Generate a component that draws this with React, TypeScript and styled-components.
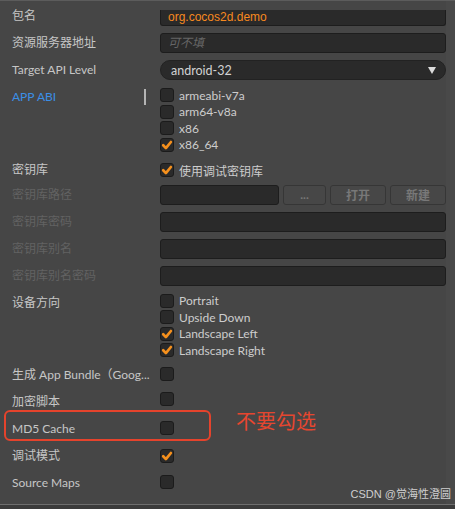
import React from "react";
import styled, { createGlobalStyle } from "styled-components";

const GlobalStyle = createGlobalStyle`
  html, body { margin: 0; padding: 0; background: #464646; }
  body { font-family: Lato, "Noto Sans CJK SC", sans-serif; font-size: 12px; color: #c8c8c8; }
  * { box-sizing: border-box; }
`;

const Frame = styled.div`
  position: relative;
  width: 455px;
  height: 509px;
  display: flex;
  flex-direction: column;
  overflow: hidden;
  background: #464646;
`;

const TopLine = styled.div`
  height: 1px;
  background: #5c5c5c;
`;

const Body = styled.div`
  flex: 1;
  display: flex;
  min-height: 0;
`;

const Viewport = styled.div`
  flex: 1;
  padding: 5px 0 0 12px;
  display: flex;
  flex-direction: column;
`;

const Gutter = styled.div`
  width: 9px;
  background: #494949;
`;

const BottomLine = styled.div`
  height: 1px;
  background: #6e6e6e;
`;

const BottomBar = styled.div`
  height: 4px;
  background: #3b3b3b;
`;

const Row = styled.div<{ $after?: number }>`
  display: grid;
  grid-template-columns: 148px 1fr;
  align-items: start;
  margin-bottom: ${(p) => (p.$after ?? 7)}px;
`;

const LabelCell = styled.div`
  display: flex;
  align-items: flex-start;
  height: 20px;
`;

const Label = styled.div<{ $tone?: "normal" | "dim" | "accent" }>`
  height: 20px;
  line-height: 20px;
  font-size: 12px;
  white-space: nowrap;
  color: ${(p) => (p.$tone === "dim" ? "#626262" : p.$tone === "accent" ? "#3b8fe6" : "#c6c6c6")};
`;

const Splitter = styled.div`
  width: 2px;
  height: 16px;
  margin: 2px 14px 0 auto;
  background: #b4b4b4;
`;

const Field = styled.div<{ $italic?: boolean; $color?: string; $cut?: boolean }>`
  height: ${(p) => (p.$cut ? 16 : 20)}px;
  margin-top: ${(p) => (p.$cut ? 4 : 0)}px;
  flex: 1;
  background: #2a2a2a;
  border: 1px solid #1d1d1d;
  ${(p) => (p.$cut ? "border-top: none;" : "")}
  border-radius: ${(p) => (p.$cut ? "0 0 3px 3px" : "3px")};
  padding: 0 7px;
  line-height: ${(p) => (p.$cut ? 14 : 18)}px;
  font-family: ${(p) => (p.$italic ? 'Lato, "Noto Sans CJK SC", sans-serif' : '"Liberation Sans", Arial, sans-serif')};
  font-style: ${(p) => (p.$italic ? "italic" : "normal")};
  font-size: 12px;
  color: ${(p) => p.$color ?? "#cfcfcf"};
  white-space: nowrap;
  overflow: hidden;
`;

const Select = styled.div`
  height: 20px;
  background: #2a2a2a;
  border: 1px solid #222;
  border-radius: 10px;
  padding: 0 9px 0 10px;
  display: flex;
  align-items: center;
  justify-content: space-between;
  color: #d2d2d2;
  font-size: 12.5px;
  font-family: Lato, "Noto Sans CJK SC", sans-serif;
`;

const Arrow = styled.span`
  width: 0;
  height: 0;
  border-left: 4.5px solid transparent;
  border-right: 4.5px solid transparent;
  border-top: 7px solid #dcdcdc;
  margin-top: 1px;
`;

const Inline = styled.div`
  display: flex;
  gap: 4px;
`;

const Button = styled.div<{ $w: number }>`
  width: ${(p) => p.$w}px;
  height: 20px;
  border: 1px solid #363636;
  background: #474747;
  border-radius: 3px;
  display: flex;
  align-items: center;
  justify-content: center;
  color: #787878;
  font-weight: 700;
  font-size: 12px;
`;

const CheckList = styled.div`
  display: flex;
  flex-direction: column;
  gap: 2.5px;
  padding: 1px 0 0.5px;
`;

const CheckItem = styled.div<{ $offset?: number }>`
  display: flex;
  align-items: center;
  gap: 5px;
  height: 14px;
  margin-top: ${(p) => p.$offset ?? 0}px;
  color: #cdcdcd;
  font-size: 12px;
  white-space: nowrap;
`;

const Box = styled.span`
  width: 14px;
  height: 14px;
  flex: none;
  background: #2a2a2a;
  border: 1px solid #1b1b1b;
  border-radius: 3px;
  display: flex;
  align-items: center;
  justify-content: center;
`;

const Highlight = styled.div`
  position: absolute;
  left: 4px;
  top: 410px;
  width: 207px;
  height: 31px;
  border: 2px solid #e5432c;
  border-radius: 6px;
`;

const Note = styled.div`
  position: absolute;
  left: 236px;
  top: 407px;
  font-family: "Noto Sans CJK SC", sans-serif;
  font-size: 20px;
  line-height: 28px;
  color: #e6462f;
`;

const Watermark = styled.div`
  position: absolute;
  right: 4px;
  top: 488px;
  font-family: "Liberation Sans", "Noto Sans CJK SC", sans-serif;
  font-size: 11px;
  line-height: 13px;
  color: #cfcfcf;
`;

const Check = ({ on }: { on?: boolean }) => (
  <Box>
    {on && (
      <svg width="12" height="12" viewBox="0 0 12 12">
        <path d="M2.2 6.3 L4.9 9.1 L9.9 3" fill="none" stroke="#f5901d" strokeWidth="2.7" strokeLinecap="round" strokeLinejoin="round" />
      </svg>
    )}
  </Box>
);

const CheckOpt = ({ label, on, offset }: { label?: string; on?: boolean; offset?: number }) => (
  <CheckItem $offset={offset}>
    <Check on={on} />
    {label && <span>{label}</span>}
  </CheckItem>
);

export default function App() {
  return (
    <>
      <GlobalStyle />
      <Frame>
        <TopLine />
        <Body>
          <Viewport>
            <Row>
              <Label>包名</Label>
              <Field $cut $color="#f7891f">org.cocos2d.demo</Field>
            </Row>
            <Row>
              <Label>资源服务器地址</Label>
              <Field $italic $color="#666">可不填</Field>
            </Row>
            <Row>
              <Label>Target API Level</Label>
              <Select>
                <span>android-32</span>
                <Arrow />
              </Select>
            </Row>
            <Row $after={7.5}>
              <LabelCell>
                <Label $tone="accent">APP ABI</Label>
                <Splitter />
              </LabelCell>
              <CheckList>
                <CheckOpt label="armeabi-v7a" />
                <CheckOpt label="arm64-v8a" />
                <CheckOpt label="x86" />
                <CheckOpt label="x86_64" on />
              </CheckList>
            </Row>
            <Row $after={5}>
              <Label>密钥库</Label>
              <CheckOpt label="使用调试密钥库" on offset={3.5} />
            </Row>
            <Row>
              <Label $tone="dim">密钥库路径</Label>
              <Inline>
                <Field />
                <Button $w={43}>...</Button>
                <Button $w={56}>打开</Button>
                <Button $w={56}>新建</Button>
              </Inline>
            </Row>
            <Row>
              <Label $tone="dim">密钥库密码</Label>
              <Field />
            </Row>
            <Row>
              <Label $tone="dim">密钥库别名</Label>
              <Field />
            </Row>
            <Row>
              <Label $tone="dim">密钥库别名密码</Label>
              <Field />
            </Row>
            <Row $after={7.5}>
              <Label>设备方向</Label>
              <CheckList>
                <CheckOpt label="Portrait" />
                <CheckOpt label="Upside Down" />
                <CheckOpt label="Landscape Left" on />
                <CheckOpt label="Landscape Right" on />
              </CheckList>
            </Row>
            <Row>
              <Label>生成 App Bundle（Goog...</Label>
              <CheckOpt offset={1.5} />
            </Row>
            <Row>
              <Label>加密脚本</Label>
              <CheckOpt offset={0} />
            </Row>
            <Row>
              <Label>MD5 Cache</Label>
              <CheckOpt offset={2} />
            </Row>
            <Row>
              <Label>调试模式</Label>
              <CheckOpt on offset={2.5} />
            </Row>
            <Row>
              <Label>Source Maps</Label>
              <CheckOpt offset={2} />
            </Row>
          </Viewport>
          <Gutter />
        </Body>
        <BottomLine />
        <BottomBar />
        <Highlight />
        <Note>不要勾选</Note>
        <Watermark>CSDN @觉海性澄圆</Watermark>
      </Frame>
    </>
  );
}
